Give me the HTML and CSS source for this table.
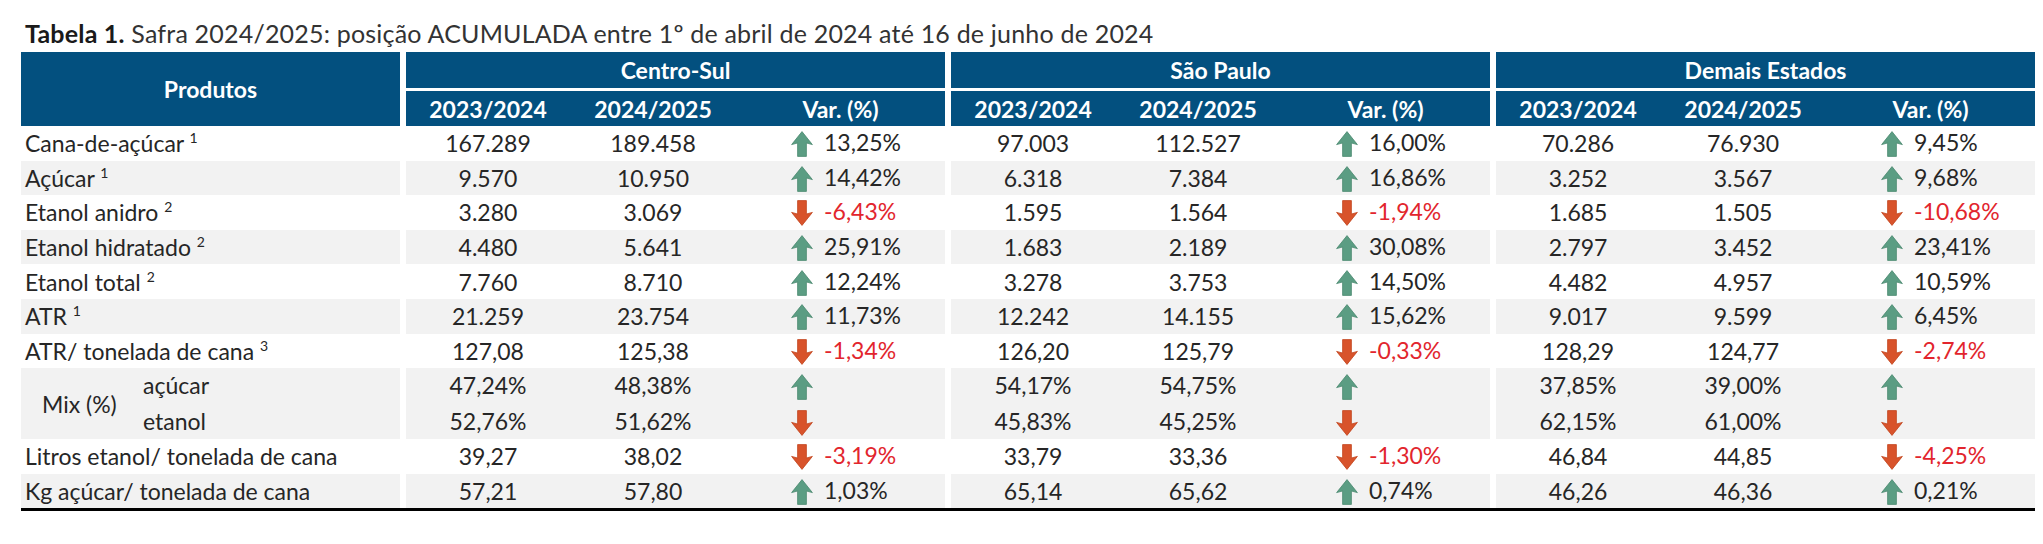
FILE: index.html
```html
<!DOCTYPE html>
<html lang="pt-BR">
<head>
<meta charset="utf-8">
<title>Tabela 1 - Safra 2024/2025</title>
<link rel="stylesheet" href="styles.css">
</head>
<body>
<svg class="defs" width="0" height="0" aria-hidden="true">
  <symbol id="a-up" viewBox="0 0 22 26"><path d="M11 0.6 L21.4 13.6 L15.4 12 L15.4 25.4 L6.6 25.4 L6.6 12 L0.6 13.6 Z"/></symbol>
  <symbol id="a-down" viewBox="0 0 22 26"><path d="M11 25.4 L21.4 12.4 L15.4 14 L15.4 0.6 L6.6 0.6 L6.6 14 L0.6 12.4 Z"/></symbol>
</svg>
<main class="page">
  <h1 class="title"><strong>Tabela 1.</strong> Safra 2024/2025: posição ACUMULADA entre 1º de abril de 2024 até 16 de junho de 2024</h1>
  <table class="tbl">
    <colgroup>
      <col class="c-prod">
      <col class="c-first"><col class="c-mid"><col class="c-var">
      <col class="c-first"><col class="c-mid"><col class="c-var">
      <col class="c-first"><col class="c-mid"><col class="c-var">
    </colgroup>
    <thead>
      <tr class="h1">
        <th rowspan="2" class="h-prod">Produtos</th>
        <th colspan="3" class="grp">Centro-Sul</th>
        <th colspan="3" class="grp">São Paulo</th>
        <th colspan="3" class="grp">Demais Estados</th>
      </tr>
      <tr class="h2">
        <th class="grp">2023/2024</th><th>2024/2025</th><th>Var. (%)</th>
        <th class="grp">2023/2024</th><th>2024/2025</th><th>Var. (%)</th>
        <th class="grp">2023/2024</th><th>2024/2025</th><th>Var. (%)</th>
      </tr>
    </thead>
    <tbody>
      <tr>
        <td class="prod">Cana-de-açúcar <sup>1</sup></td>
        <td class="grp">167.289</td><td>189.458</td><td class="var"><svg class="arr up"><use href="#a-up"/></svg>13,25%</td>
        <td class="grp">97.003</td><td>112.527</td><td class="var"><svg class="arr up"><use href="#a-up"/></svg>16,00%</td>
        <td class="grp">70.286</td><td>76.930</td><td class="var"><svg class="arr up"><use href="#a-up"/></svg>9,45%</td>
      </tr>
      <tr class="alt">
        <td class="prod">Açúcar <sup>1</sup></td>
        <td class="grp">9.570</td><td>10.950</td><td class="var"><svg class="arr up"><use href="#a-up"/></svg>14,42%</td>
        <td class="grp">6.318</td><td>7.384</td><td class="var"><svg class="arr up"><use href="#a-up"/></svg>16,86%</td>
        <td class="grp">3.252</td><td>3.567</td><td class="var"><svg class="arr up"><use href="#a-up"/></svg>9,68%</td>
      </tr>
      <tr>
        <td class="prod">Etanol anidro <sup>2</sup></td>
        <td class="grp">3.280</td><td>3.069</td><td class="var neg"><svg class="arr down"><use href="#a-down"/></svg>-6,43%</td>
        <td class="grp">1.595</td><td>1.564</td><td class="var neg"><svg class="arr down"><use href="#a-down"/></svg>-1,94%</td>
        <td class="grp">1.685</td><td>1.505</td><td class="var neg"><svg class="arr down"><use href="#a-down"/></svg>-10,68%</td>
      </tr>
      <tr class="alt">
        <td class="prod">Etanol hidratado <sup>2</sup></td>
        <td class="grp">4.480</td><td>5.641</td><td class="var"><svg class="arr up"><use href="#a-up"/></svg>25,91%</td>
        <td class="grp">1.683</td><td>2.189</td><td class="var"><svg class="arr up"><use href="#a-up"/></svg>30,08%</td>
        <td class="grp">2.797</td><td>3.452</td><td class="var"><svg class="arr up"><use href="#a-up"/></svg>23,41%</td>
      </tr>
      <tr>
        <td class="prod">Etanol total <sup>2</sup></td>
        <td class="grp">7.760</td><td>8.710</td><td class="var"><svg class="arr up"><use href="#a-up"/></svg>12,24%</td>
        <td class="grp">3.278</td><td>3.753</td><td class="var"><svg class="arr up"><use href="#a-up"/></svg>14,50%</td>
        <td class="grp">4.482</td><td>4.957</td><td class="var"><svg class="arr up"><use href="#a-up"/></svg>10,59%</td>
      </tr>
      <tr class="alt">
        <td class="prod">ATR <sup>1</sup></td>
        <td class="grp">21.259</td><td>23.754</td><td class="var"><svg class="arr up"><use href="#a-up"/></svg>11,73%</td>
        <td class="grp">12.242</td><td>14.155</td><td class="var"><svg class="arr up"><use href="#a-up"/></svg>15,62%</td>
        <td class="grp">9.017</td><td>9.599</td><td class="var"><svg class="arr up"><use href="#a-up"/></svg>6,45%</td>
      </tr>
      <tr>
        <td class="prod">ATR/ tonelada de cana <sup>3</sup></td>
        <td class="grp">127,08</td><td>125,38</td><td class="var neg"><svg class="arr down"><use href="#a-down"/></svg>-1,34%</td>
        <td class="grp">126,20</td><td>125,79</td><td class="var neg"><svg class="arr down"><use href="#a-down"/></svg>-0,33%</td>
        <td class="grp">128,29</td><td>124,77</td><td class="var neg"><svg class="arr down"><use href="#a-down"/></svg>-2,74%</td>
      </tr>
      <tr class="alt mixrow">
        <td class="prod">
          <div class="mix">
            <span class="mix-label">Mix (%)</span>
            <span class="mix-items"><span>açúcar</span><span>etanol</span></span>
          </div>
        </td>
        <td class="grp"><div class="ln">47,24%</div><div class="ln">52,76%</div></td>
        <td><div class="ln">48,38%</div><div class="ln">51,62%</div></td>
        <td class="var"><div class="ln"><svg class="arr up"><use href="#a-up"/></svg></div><div class="ln"><svg class="arr down"><use href="#a-down"/></svg></div></td>
        <td class="grp"><div class="ln">54,17%</div><div class="ln">45,83%</div></td>
        <td><div class="ln">54,75%</div><div class="ln">45,25%</div></td>
        <td class="var"><div class="ln"><svg class="arr up"><use href="#a-up"/></svg></div><div class="ln"><svg class="arr down"><use href="#a-down"/></svg></div></td>
        <td class="grp"><div class="ln">37,85%</div><div class="ln">62,15%</div></td>
        <td><div class="ln">39,00%</div><div class="ln">61,00%</div></td>
        <td class="var"><div class="ln"><svg class="arr up"><use href="#a-up"/></svg></div><div class="ln"><svg class="arr down"><use href="#a-down"/></svg></div></td>
      </tr>
      <tr>
        <td class="prod">Litros etanol/ tonelada de cana</td>
        <td class="grp">39,27</td><td>38,02</td><td class="var neg"><svg class="arr down"><use href="#a-down"/></svg>-3,19%</td>
        <td class="grp">33,79</td><td>33,36</td><td class="var neg"><svg class="arr down"><use href="#a-down"/></svg>-1,30%</td>
        <td class="grp">46,84</td><td>44,85</td><td class="var neg"><svg class="arr down"><use href="#a-down"/></svg>-4,25%</td>
      </tr>
      <tr class="alt">
        <td class="prod">Kg açúcar/ tonelada de cana</td>
        <td class="grp">57,21</td><td>57,80</td><td class="var"><svg class="arr up"><use href="#a-up"/></svg>1,03%</td>
        <td class="grp">65,14</td><td>65,62</td><td class="var"><svg class="arr up"><use href="#a-up"/></svg>0,74%</td>
        <td class="grp">46,26</td><td>46,36</td><td class="var"><svg class="arr up"><use href="#a-up"/></svg>0,21%</td>
      </tr>
    </tbody>
  </table>
</main>
</body>
</html>
```

FILE: styles.css
```css
html, body {
  margin: 0;
  padding: 0;
  background: #ffffff;
}

.defs {
  position: absolute;
  width: 0;
  height: 0;
  overflow: hidden;
}

.page {
  padding: 18px 0 0 21px;
  font-family: Lato, "Liberation Sans", sans-serif;
}

.title {
  margin: 0 0 4px 4px;
  font-size: 25px;
  font-weight: 400;
  line-height: 30px;
  letter-spacing: 0.2px;
  color: #333333;
  white-space: nowrap;
}

.title strong {
  font-weight: 700;
  color: #1a1a1a;
}

.tbl {
  border-collapse: separate;
  border-spacing: 0;
  table-layout: fixed;
  width: 2013px;
  border-bottom: 3px solid #000000;
  font-size: 23px;
  color: #262626;
}

.c-prod { width: 379px; }
.c-first { width: 170px; }
.c-mid { width: 166px; }
.c-var { width: 209px; }

.tbl th,
.tbl td {
  padding: 0;
  white-space: nowrap;
  vertical-align: middle;
  line-height: 26px;
}

.tbl th {
  background: #03507f;
  color: #ffffff;
  font-weight: 700;
  text-align: center;
}

.tbl .grp {
  border-left: 6px solid #ffffff;
}

.h1 { height: 36px; }
.h2 { height: 38px; }

.h2 th {
  border-top: 3px solid #ffffff;
}

.tbl td {
  text-align: center;
}

.tbl tbody tr { height: 34.6px; }
.tbl tbody tr.mixrow { height: 71px; }

.tbl tr.alt td {
  background: #f2f2f2;
}

.tbl td.prod {
  text-align: left;
  padding-left: 4px;
}

.tbl sup {
  font-size: 14px;
  line-height: 0;
  vertical-align: 9px;
}

.tbl td.var {
  text-align: left;
  padding-left: 55px;
}

.tbl td.neg {
  color: #e2252d;
}

.arr {
  display: inline-block;
  width: 22px;
  height: 26px;
  margin-right: 11px;
  vertical-align: -6px;
  stroke-width: 0.8;
  stroke-linejoin: round;
}

.arr.up {
  fill: #5b9d83;
  stroke: #4c8a71;
}

.arr.down {
  fill: #d8532b;
  stroke: #c2461f;
}

.ln {
  line-height: 35.5px;
  height: 35.5px;
}

.mix {
  display: flex;
  align-items: center;
}

.mix-label {
  box-sizing: border-box;
  width: 118px;
  padding-left: 17px;
}

.mix-items {
  display: flex;
  flex-direction: column;
  line-height: 35.5px;
}
```
